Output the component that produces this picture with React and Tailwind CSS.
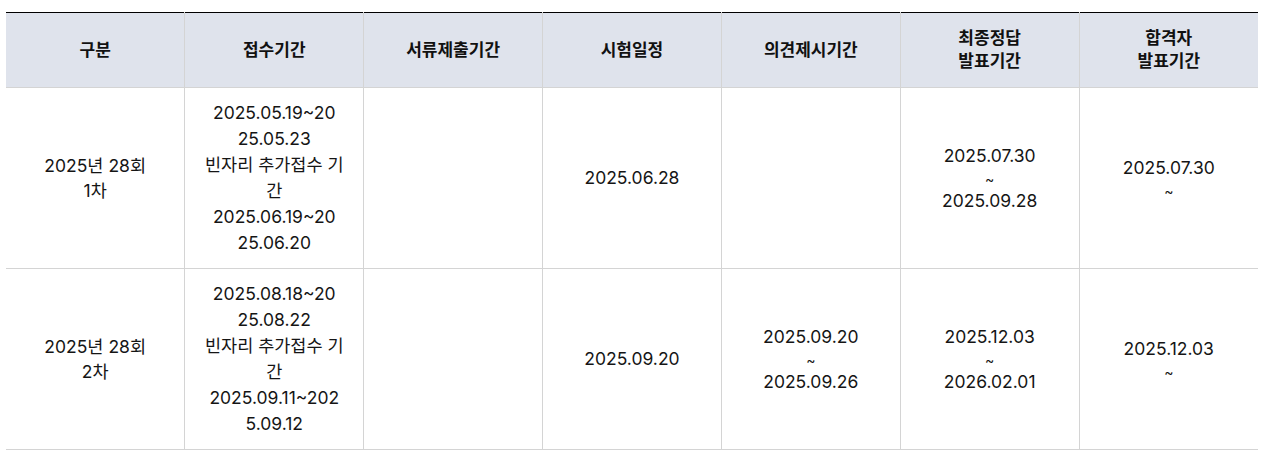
import React from 'react';

const headers = ['구분', '접수기간', '서류제출기간', '시험일정', '의견제시기간', ['최종정답', '발표기간'], ['합격자', '발표기간']];

const rows = [
    {
        round: ['2025년 28회', '1차'],
        // the cell wraps narrow, so the lines are set as they break on the page
        apply: ['2025.05.19~20', '25.05.23', '빈자리 추가접수 기', '간', '2025.06.19~20', '25.06.20'],
        docs: null,
        exam: ['2025.06.28'],
        opinion: null,
        answer: ['2025.07.30', '~', '2025.09.28'],
        pass: ['2025.07.30', '~'],
    },
    {
        round: ['2025년 28회', '2차'],
        apply: ['2025.08.18~20', '25.08.22', '빈자리 추가접수 기', '간', '2025.09.11~202', '5.09.12'],
        docs: null,
        exam: ['2025.09.20'],
        opinion: ['2025.09.20', '~', '2025.09.26'],
        answer: ['2025.12.03', '~', '2026.02.01'],
        pass: ['2025.12.03', '~'],
    },
];

// date / tilde stacks: the tilde line is set a bit smaller
function Dates({ items }) {
    if (!items) return null;
    return items.map((t, i) =>
        t === '~' ? (
            <div key={i} className="text-[14px] leading-[21px]">~</div>
        ) : (
            <div key={i} className="leading-6">{t}</div>
        )
    );
}

export default function App() {
    const td = 'border-b border-[#d4d4d4] px-[23px] text-center align-middle';
    return (
        <div className="pt-3 pl-[6px] pr-[3px] font-['Inter','Noto_Sans_CJK_KR',sans-serif] text-[17.5px] text-[#151515]">
            <table className="w-full table-fixed border-collapse border-t border-t-black">
                <thead>
                    <tr className="h-[75px] bg-[#dfe3ec]">
                        {headers.map((h, i) => (
                            <th
                                key={i}
                                className={`border-b border-[#d4d4d4] text-[17px] font-bold leading-[23px] text-[#111] ${i > 0 ? 'border-l' : ''}`}
                            >
                                {Array.isArray(h) ? h.map((l) => <div key={l}>{l}</div>) : h}
                            </th>
                        ))}
                    </tr>
                </thead>
                <tbody>
                    {rows.map((r, i) => (
                        <tr key={i} className="h-[181px]">
                            <td className={`${td} leading-[25px]`}>
                                {r.round.map((l) => <div key={l}>{l}</div>)}
                            </td>
                            <td className={`${td} border-l`}>
                                <div className="flex flex-col items-center whitespace-nowrap leading-[26px]">
                                    {r.apply.map((l, j) => <div key={j}>{l}</div>)}
                                </div>
                            </td>
                            <td className={`${td} border-l`}>{r.docs}</td>
                            <td className={`${td} border-l`}><Dates items={r.exam} /></td>
                            <td className={`${td} border-l`}><Dates items={r.opinion} /></td>
                            <td className={`${td} border-l`}><Dates items={r.answer} /></td>
                            <td className={`${td} border-l`}><Dates items={r.pass} /></td>
                        </tr>
                    ))}
                </tbody>
            </table>
        </div>
    );
}
